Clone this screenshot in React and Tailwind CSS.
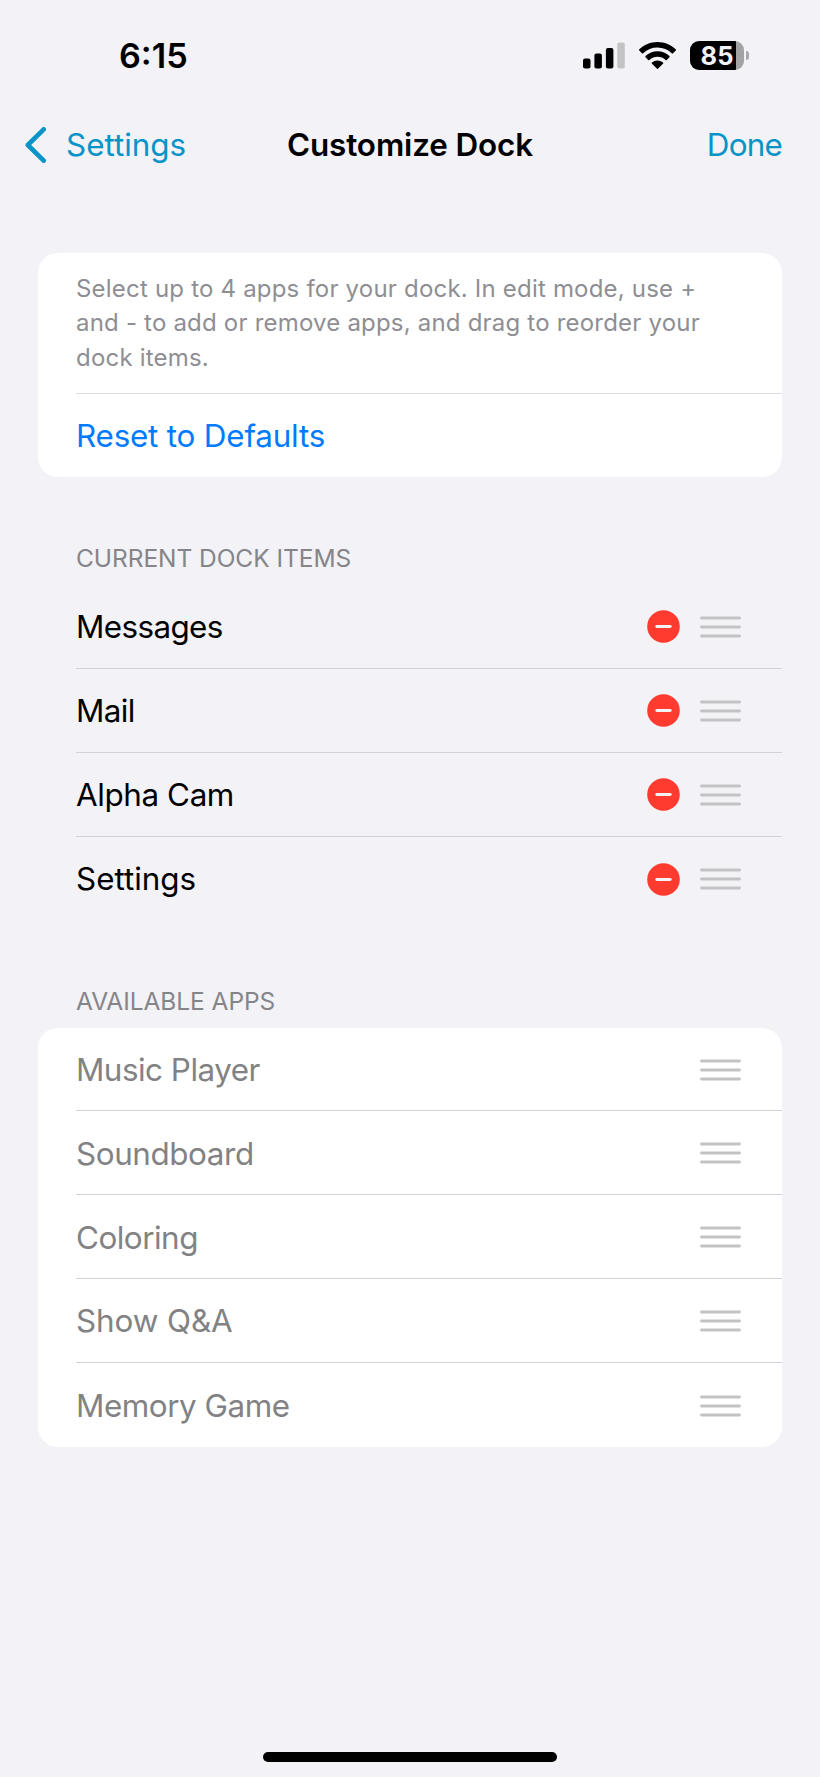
const currentItems = [
    { name: "Messages", tracking: "tracking-[-0.6px]" },
    { name: "Mail", tracking: "tracking-[-0.6px]" },
    { name: "Alpha Cam", tracking: "tracking-[-0.4px]" },
    { name: "Settings", tracking: "tracking-normal" },
];
const availableApps = [
    { name: "Music Player", tracking: "tracking-[-0.5px]" },
    { name: "Soundboard", tracking: "tracking-[-0.4px]" },
    { name: "Coloring", tracking: "tracking-[-0.5px]" },
    { name: "Show Q&A", tracking: "tracking-[-0.1px]" },
    { name: "Memory Game", tracking: "tracking-[-0.45px]" },
];

function StatusBar() {
    return <div className="flex h-[111px] items-center justify-between pl-[119px] pr-[71px]">
        <span className="pt-[2px] text-[34.2px] font-semibold leading-none">6:15</span>
        <div className="flex items-center">
            {/* Signal */}
            <svg className="h-[27px] w-[42px]" viewBox="0 0 42 27">
                <rect x="0" y="16.5" width="7.5" height="10" rx="2" />
                <rect x="11.4" y="11.5" width="7.5" height="15" rx="2" />
                <rect x="22.9" y="6" width="7.5" height="20.5" rx="2" />
                <rect x="34.3" y="0.5" width="7.5" height="26" rx="2" fill="#c3c3c6" />
            </svg>
            {/* Wifi */}
            <svg className="ml-[14px] h-[27px] w-[37px]" viewBox="0 0 37 27">
                <path d="M18.5 0C11.4 0 5 2.8.3 7.3a.9.9 0 0 0 0 1.3l2.6 2.6a.9.9 0 0 0 1.3 0A20.6 20.6 0 0 1 18.5 5.5c5.5 0 10.6 2.2 14.3 5.7a.9.9 0 0 0 1.3 0l2.6-2.6a.9.9 0 0 0 0-1.3C32 2.8 25.6 0 18.5 0z" />
                <path d="M18.5 9.3c-4.6 0-8.8 1.8-11.9 4.7a.9.9 0 0 0 0 1.3l2.6 2.6a.9.9 0 0 0 1.2 0 11.9 11.9 0 0 1 16.2 0 .9.9 0 0 0 1.2 0l2.6-2.6a.9.9 0 0 0 0-1.3c-3.1-2.9-7.3-4.7-11.9-4.7z" />
                <path d="M18.5 18.5c-2.1 0-4 .7-5.5 2a.9.9 0 0 0 0 1.3l4.8 4.8a1 1 0 0 0 1.4 0l4.8-4.8a.9.9 0 0 0 0-1.3 8.5 8.5 0 0 0-5.5-2z" />
            </svg>
            {/* Battery */}
            <div className="ml-[14px] flex items-center gap-[2px]">
                <div className="flex h-[29px] w-[54px] items-center justify-center overflow-hidden rounded-[9px] bg-[linear-gradient(to_right,#000_46px,#a3a3a6_46px)]">
                    <span className="text-[25.5px] font-bold leading-none text-[#f2f2f7]">85</span>
                </div>
                <div className="h-[9px] w-[3px] rounded-r-full bg-[#a9a9ac]" />
            </div>
        </div>
    </div>
}

function NavBar() {
    return <div className="grid h-[67px] grid-cols-3 items-center px-[25px] text-[31.4px] leading-none">
        <button className="flex items-center text-[#0894c8]">
            <svg className="h-9 w-[22px]" viewBox="0 0 22 36" fill="none" stroke="currentColor" strokeWidth="4.6" strokeLinecap="round" strokeLinejoin="round">
                <path d="M18.7 2.3L2.8 18l15.9 15.7" />
            </svg>
            <span className="ml-[19px] pt-[2px]">Settings</span>
        </button>
        <h1 className="whitespace-nowrap pt-[2px] text-center font-semibold tracking-[-0.1px]">Customize Dock</h1>
        <button className="pr-[13px] pt-[2px] text-right tracking-[-0.8px] text-[#0894c8]">Done</button>
    </div>
}

function DragHandle() {
    return <svg className="h-[22px] w-[41px]" viewBox="0 0 41 22" stroke="#c3c3c5" strokeWidth="2.9" strokeLinecap="round">
        <path d="M1.5 2h38M1.5 11h38M1.5 20h38" />
    </svg>
}

function Row({ name, tracking, removable, last }) {
    return <li className="pl-[38px]">
        <div className={`flex h-[83.9px] items-center justify-between pr-[41px] pt-px ${last ? "" : "border-b border-[#d3d3d6]"}`}>
            <span className={`pt-[2px] ${tracking}`}>{name}</span>
            <div className="flex items-center gap-5">
                {removable && <svg className="size-[33px]" viewBox="0 0 33 33">
                    <circle cx="16.5" cy="16.5" r="16.3" fill="#ff3b30" />
                    <path d="M9.8 16.5h13.4" stroke="#f2f2f7" strokeWidth="2.9" strokeLinecap="round" />
                </svg>}
                <DragHandle />
            </div>
        </div>
    </li>
}

export default function App() {
    return <div className="flex h-[1777px] w-[820px] flex-col bg-[#f2f2f7] font-['Inter',sans-serif] text-black">
        <StatusBar />
        <NavBar />
        <main className="flex-1 px-[38px] pt-[75px] text-[31.4px] leading-none">
            <section className="h-[224px] rounded-[20px] bg-white pl-[38px]">
                <p className="h-[141px] border-b border-[#dddde0] pt-[19px] text-[24px] leading-[34.3px] tracking-[0.2px] text-[#8e8e93]">
                    Select up to 4 apps for your dock. In edit mode, use +<br />
                    and - to add or remove apps, and drag to reorder your<br />
                    dock items.
                </p>
                <button className="flex h-[83px] items-center pt-[2px] tracking-[-0.2px] text-[#007aff]">Reset to Defaults</button>
            </section>

            <h2 className="mt-[69px] pl-[38px] text-[24.5px] leading-6 tracking-[-0.06px] text-[#858589]">CURRENT DOCK ITEMS</h2>
            <ul className="mt-[15px]">
                {currentItems.map((item, i) => (
                    <Row key={item.name} {...item} removable last={i === currentItems.length - 1} />
                ))}
            </ul>

            <h2 className="mt-[68px] pl-[38px] text-[24.5px] leading-6 tracking-[-0.06px] text-[#858589]">AVAILABLE APPS</h2>
            <ul className="mt-[15px] rounded-[20px] bg-white text-[#828284]">
                {availableApps.map((item, i) => (
                    <Row key={item.name} {...item} last={i === availableApps.length - 1} />
                ))}
            </ul>
        </main>
        {/* Home indicator */}
        <div className="mx-auto mb-[15px] h-[10px] w-[294px] rounded-full bg-black" />
    </div>
}
